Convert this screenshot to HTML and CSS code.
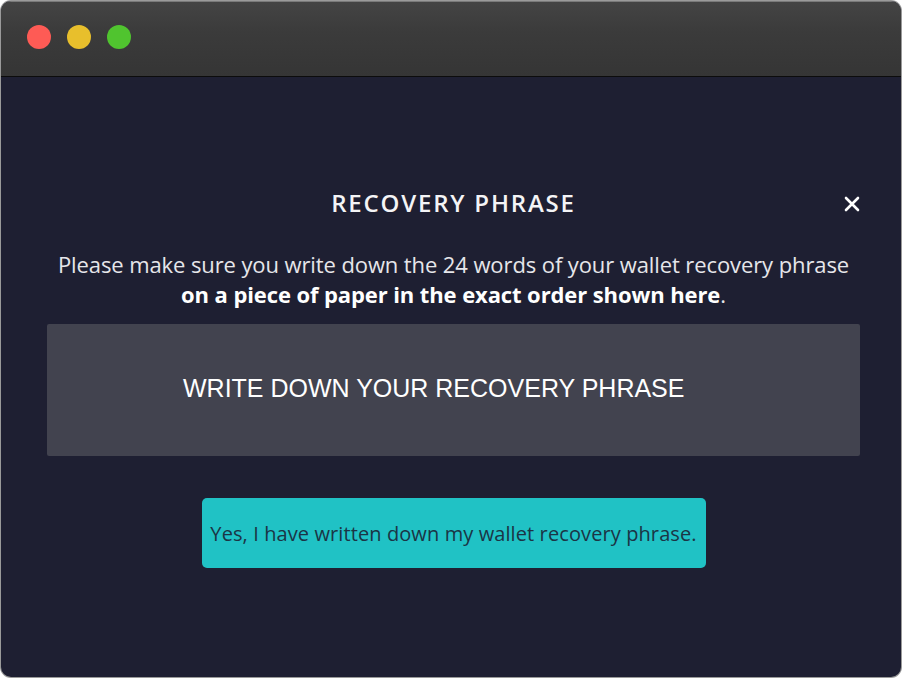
FILE: index.html
```html
<!DOCTYPE html>
<html lang="en">
<head>
    <meta charset="UTF-8">
    <meta name="viewport" content="width=device-width, initial-scale=1.0">
    <title>Recovery Phrase</title>
    <link rel="stylesheet" href="styles.css">
</head>
<body>
    <div class="window">
        <div class="titlebar">
            <span class="dot red"></span>
            <span class="dot yellow"></span>
            <span class="dot green"></span>
        </div>
        <div class="content">
            <div class="dialog-head">
                <h1>RECOVERY PHRASE</h1>
                <svg class="close" width="16" height="16" viewBox="0 0 16 16">
                    <path d="M2 2 L14 14 M14 2 L2 14" stroke="#fff" stroke-width="2.6" stroke-linecap="round"/>
                </svg>
            </div>
            <p class="intro">
                Please make sure you write down the 24 words of your wallet recovery phrase
                <br><b>on a piece of paper in the exact order shown here</b>.
            </p>
            <div class="phrase-box">WRITE DOWN YOUR RECOVERY PHRASE</div>
            <div class="actions">
                <button class="confirm">Yes, I have written down my wallet recovery phrase.</button>
            </div>
        </div>
    </div>
</body>
</html>
```

FILE: styles.css
```css
html, body {
    margin: 0;
    background: #fff;
}
body {
    padding: 1px;
    width: 900px;
    height: 676px;
}
.window {
    height: 100%;
    border-radius: 10px;
    overflow: hidden;
    box-shadow: 0 0 0 1px #9a9a9a;
    background: #1e1f32;
    display: flex;
    flex-direction: column;
}
.titlebar {
    flex-shrink: 0;
    background: linear-gradient(#444 0%, #3b3b3b 40%, #353535 100%);
    border-top: 1px solid #7a7a7a;
    border-bottom: 1px solid #0c0c0c;
    display: flex;
    align-items: center;
    gap: 16px;
    padding-left: 26px;
    box-sizing: border-box;
    height: 76px;
}
.titlebar .dot {
    width: 24px;
    height: 24px;
    border-radius: 50%;
    margin-top: -4px;
}
.red { background: #fe5b55; }
.yellow { background: #e8bf2c; }
.green { background: #50c42f; }
.content {
    flex: 1;
    font-family: 'Open Sans', sans-serif;
    color: #e6e6ea;
    padding: 0 41px 0 46px;
}
.dialog-head {
    position: relative;
    margin-top: 110px;
    text-align: center;
}
h1 {
    margin: 0;
    font-size: 24px;
    font-weight: 600;
    letter-spacing: 1.8px;
    color: #f4f4f6;
    line-height: 32px;
}
.close {
    position: absolute;
    right: 0;
    top: 9px;
}
.intro {
    margin: 30px 0 0;
    text-align: center;
    font-size: 22px;
    line-height: 30px;
    letter-spacing: -0.1px;
}
.intro b {
    font-weight: 700;
    color: #fff;
}
.phrase-box {
    margin-top: 15px;
    height: 132px;
    background: #42434f;
    border-radius: 2px;
    box-sizing: border-box;
    padding: 0 0 4px 136px;
    display: flex;
    align-items: center;
    font-family: 'Liberation Sans', Arial, sans-serif;
    font-size: 25px;
    color: #fff;
}
.actions {
    display: flex;
    justify-content: center;
    margin-top: 42px;
}
.confirm {
    width: 504px;
    height: 70px;
    background: #20c2c5;
    border: none;
    border-radius: 5px;
    font-family: 'Open Sans', sans-serif;
    font-size: 20px;
    letter-spacing: 0.1px;
    color: #1b3545;
    cursor: pointer;
}
```
